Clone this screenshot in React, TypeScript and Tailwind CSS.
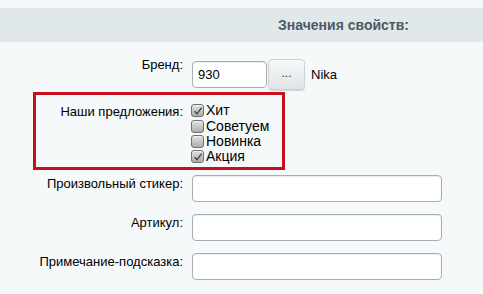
import React from "react";

function Box({ checked }: { checked?: boolean }) {
  return (
    <span className="relative inline-block w-[13px] h-[13px] rounded-[3px] border border-[#707070] bg-gradient-to-b from-[#e2e2e2] to-[#adadad] shadow-[inset_0_1px_0_rgba(255,255,255,0.6)] shrink-0">
      {checked && (
        <svg className="absolute left-[1px] top-[1px]" width="10" height="10" viewBox="0 0 10 10">
          <path d="M1.5 5.2 L4 7.6 L8.6 1.8" fill="none" stroke="#4a4a4a" strokeWidth="1.4" />
        </svg>
      )}
    </span>
  );
}

function Input({ value, w }: { value?: string; w: string }) {
  return (
    <div
      className={`${w} h-[27px] bg-white border border-[#a6adb5] rounded-[4px] shadow-[inset_0_1px_1px_rgba(0,0,0,0.08)] flex items-center pl-[5px] text-[13px] text-black`}
    >
      {value}
    </div>
  );
}

export default function App() {
  const items: [string, boolean][] = [
    ["Хит", true],
    ["Советуем", false],
    ["Новинка", false],
    ["Акция", true],
  ];
  return (
    <div
      className="w-[483px] h-[294px] bg-[#f5f9f9] overflow-hidden text-[13px] text-black"
      style={{ fontFamily: '"Liberation Sans", Arial, sans-serif' }}
    >
      <div className="h-[8px]" />
      <div className="h-[34px] bg-[#e0e8ea] flex items-center pl-[278px] font-bold text-[#4b5b65] text-[14px]">
        Значения свойств:
      </div>
      <div className="h-[17px]" />
      {/* Brand row */}
      <div className="flex h-[31px]">
        <div className="w-[183px] text-right leading-[15px] -mt-[2px]">Бренд:</div>
        <div className="ml-[9px] flex items-center">
          <Input value="930" w="w-[75px]" />
          <div className="ml-[1px] w-[37px] h-[31px] rounded-[4px] border border-[#cdd2d5] bg-gradient-to-b from-[#f7f8f8] to-[#dfe4e6] shadow-[0_1px_1px_rgba(0,0,0,0.15)] flex items-center justify-center text-[#333] text-[12px] pb-[3px]">
            ...
          </div>
          <span className="ml-[6px]">Nika</span>
        </div>
      </div>
      <div className="h-[2px]" />
      {/* Red box */}
      <div className="ml-[33px] w-[252px] h-[78px] border-[3px] border-[#c8101a] flex pt-[8px]">
        <div className="w-[147px] text-right leading-[15px] pt-[1px]">Наши предложения:</div>
        <div className="ml-[8px] flex flex-col">
          {items.map(([t, c]) => (
            <div key={t} className="flex items-center h-[15.4px]">
              <Box checked={c} />
              <span className="ml-[2px] leading-[15px] text-[14px]">{t}</span>
            </div>
          ))}
        </div>
      </div>
      <div className="h-[5px]" />
      {[
        "Произвольный стикер:",
        "Артикул:",
        "Примечание-подсказка:",
      ].map((l, i) => (
        <div key={l} className={`flex ${i > 0 ? "mt-[12px]" : ""}`}>
          <div className="w-[183px] text-right leading-[15px] pt-[1px]">{l}</div>
          <div className="ml-[9px]">
            <Input w="w-[250px]" />
          </div>
        </div>
      ))}
    </div>
  );
}
